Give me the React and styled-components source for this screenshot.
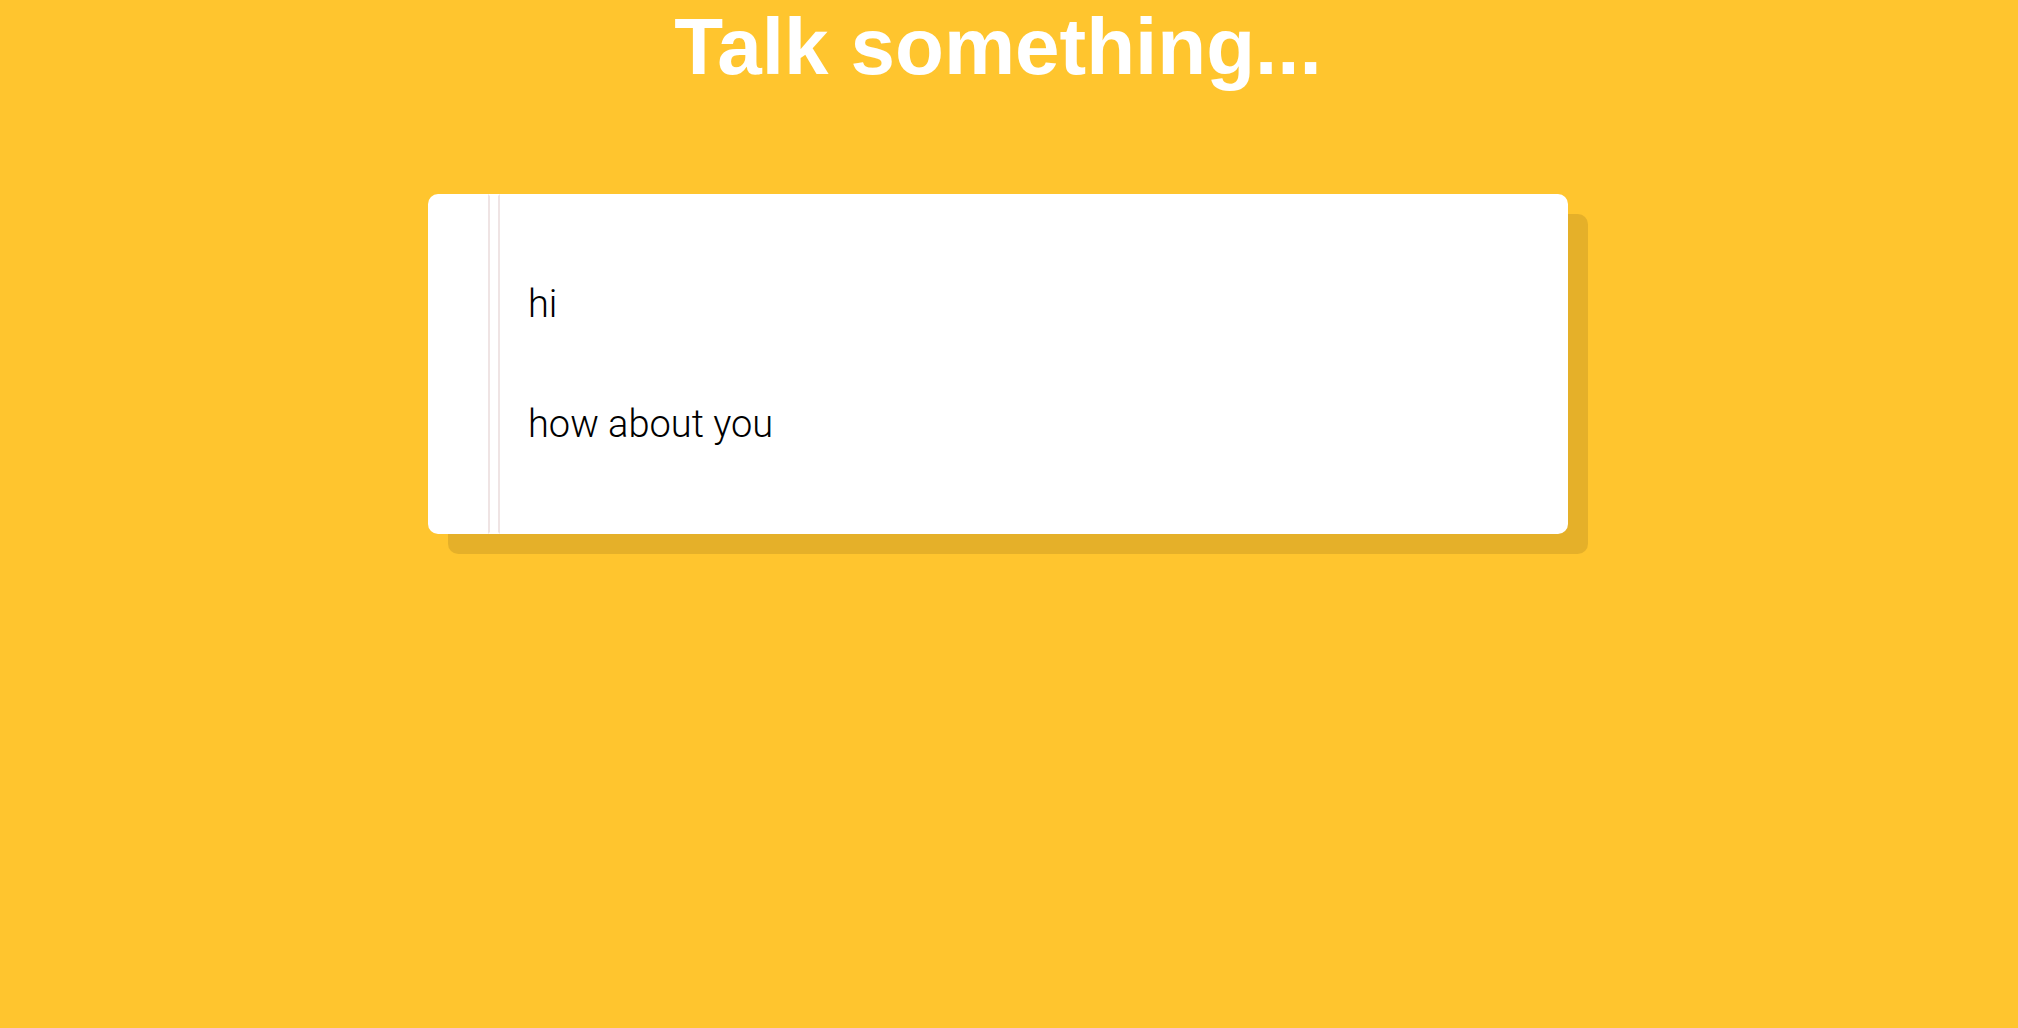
import React from 'react';
import styled, { createGlobalStyle } from 'styled-components';

const GlobalStyle = createGlobalStyle`
  *, *::before, *::after {
    box-sizing: border-box;
  }

  body {
    margin: 0;
    min-height: 100vh;
    background: #ffc52e;
    font-family: Roboto, 'Liberation Sans', sans-serif;
  }
`;

const Page = styled.main`
  padding-right: 22px;
`;

const Title = styled.h1`
  margin: 0;
  color: #fff;
  font: bold 80px/94px 'Liberation Sans', Arial, sans-serif;
  text-align: center;
`;

const Notebook = styled.section`
  position: relative;
  display: flex;
  flex-direction: column;
  gap: 60px;
  max-width: 1140px;
  margin: 100px auto;
  padding: 80px 32px 80px 100px;
  border-radius: 10px;
  background: #fff;
  box-shadow: 20px 20px 0 rgba(0, 0, 0, 0.1);

  /* double margin rule of a sheet of paper */
  &::before {
    content: '';
    position: absolute;
    top: 0;
    bottom: 0;
    left: 60px;
    width: 12px;
    border: 2px solid;
    border-color: transparent #efe4e4;
  }
`;

const Phrase = styled.p`
  margin: 0;
  color: #000;
  font-size: 38px;
  font-weight: 300;
  line-height: 60px;
`;

const phrases = ['hi', 'how about you'];

export default function App() {
  return (
    <>
      <GlobalStyle />
      <Page>
        <Title>Talk something...</Title>
        <Notebook>
          {phrases.map((phrase) => (
            <Phrase key={phrase}>{phrase}</Phrase>
          ))}
        </Notebook>
      </Page>
    </>
  );
}
